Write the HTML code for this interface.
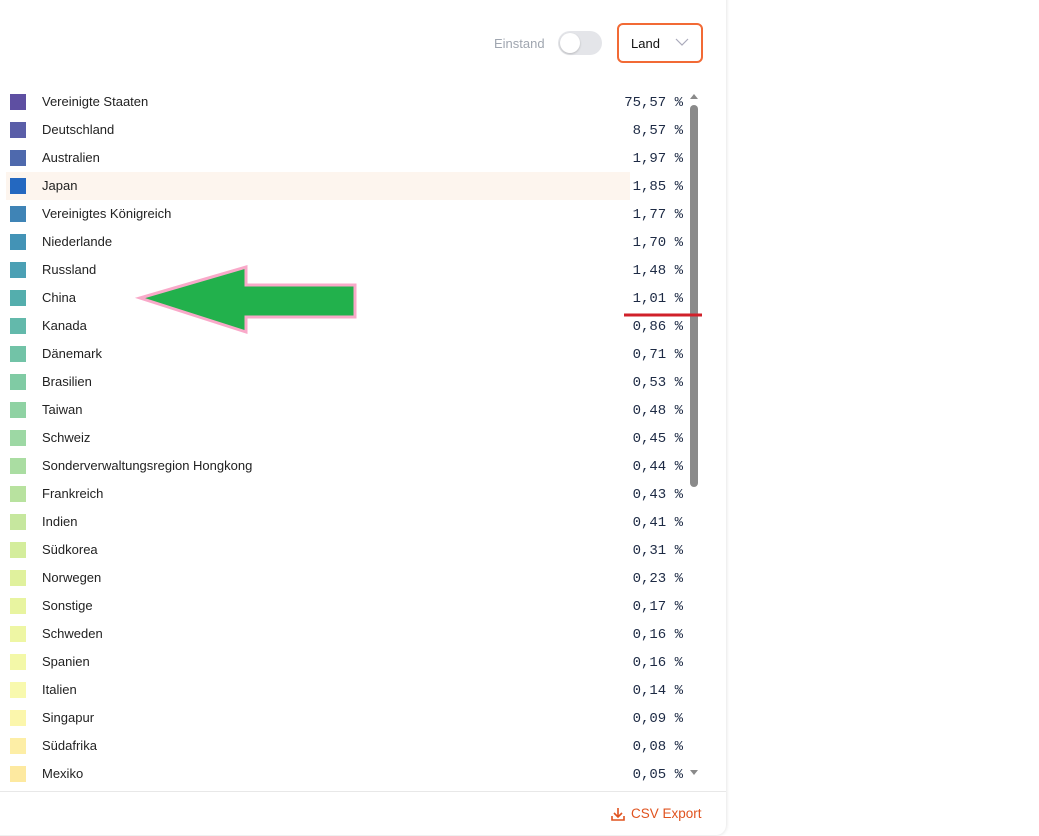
<!DOCTYPE html>
<html><head><meta charset="utf-8"><style>
body{margin:0;width:1039px;height:836px;background:#fff;position:relative;overflow:hidden;font-family:"Liberation Sans",sans-serif}
.card{position:absolute;left:-10px;top:-10px;width:736px;height:845px;background:#fff;border-radius:10px;box-shadow:0 0 4px rgba(0,0,0,.15)}
.row{position:absolute;left:0;width:630px;height:28px}
.sq{position:absolute;left:10px;top:6px;width:16px;height:16px}
.nm{position:absolute;left:42px;top:6px;font-size:13px;color:#222}
.pc{position:absolute;right:-53px;top:7px;font-family:"Liberation Mono",monospace;font-size:14px;color:#1d2a44;white-space:pre}
</style></head><body>
<div class="card"></div>
<div style="position:absolute;left:494px;top:36px;font-size:13px;color:#a0a6b0">Einstand</div>
<div style="position:absolute;left:558px;top:31px;width:44px;height:24px;border-radius:12px;background:#e4e5e9"></div>
<div style="position:absolute;left:560px;top:33px;width:20px;height:20px;border-radius:10px;background:#fff;box-shadow:0 1px 2px rgba(0,0,0,.2)"></div>
<div style="position:absolute;left:617px;top:23px;width:82px;height:36px;border:2px solid #f26a35;border-radius:6px"></div>
<div style="position:absolute;left:631px;top:36px;font-size:13px;color:#111">Land</div>
<svg style="position:absolute;left:675px;top:37px" width="14" height="10"><path d="M1 2 L7 8 L13 2" stroke="#aab" fill="none" stroke-width="1.2"/></svg>
<div style="position:absolute;left:6px;top:172px;width:624px;height:28px;background:#fdf5ee"></div>
<div id="list"></div>
<div style="position:absolute;left:690px;top:105px;width:8px;height:382px;border-radius:4px;background:#8a8a8a"></div>
<svg style="position:absolute;left:688px;top:92px" width="12" height="8"><path d="M2 7 L6 2 L10 7Z" fill="#8a8a8a"/></svg>
<svg style="position:absolute;left:688px;top:769px" width="12" height="8"><path d="M2 1 L6 6 L10 1Z" fill="#8a8a8a"/></svg>
<div style="position:absolute;left:0;top:791px;width:726px;height:1px;background:#e8e8e8"></div>
<svg style="position:absolute;left:610px;top:806px" width="16" height="16"><path d="M8 2 V10 M4 7 L8 11 L12 7 M2 10 V14 H14 V10" stroke="#e0531f" stroke-width="1.6" fill="none"/></svg>
<div style="position:absolute;left:631px;top:806px;font-size:13.5px;color:#e0531f">CSV Export</div>
<svg style="position:absolute;left:0;top:0" width="1039" height="836"><polygon points="140,298 246,267 246,285 355,285 355,317 246,317 246,332" fill="#22b14c" stroke="#f9a9c9" stroke-width="3"/><line x1="624" y1="315" x2="702" y2="315" stroke="#d0202a" stroke-width="3"/></svg>
<script>
var d=[["Vereinigte Staaten","75,57","#5e4fa2"],["Deutschland","8,57","#5a5ea8"],["Australien","1,97","#4e69ad"],["Japan","1,85","#2468c0"],["Vereinigtes Königreich","1,77","#3f84b6"],["Niederlande","1,70","#4393b6"],["Russland","1,48","#4ba0b4"],["China","1,01","#54aead"],["Kanada","0,86","#63b9ab"],["Dänemark","0,71","#72c3a7"],["Brasilien","0,53","#80cba4"],["Taiwan","0,48","#8fd2a3"],["Schweiz","0,45","#9dd8a4"],["Sonderverwaltungsregion Hongkong","0,44","#aadda2"],["Frankreich","0,43","#b8e29f"],["Indien","0,41","#c6e79e"],["Südkorea","0,31","#d4ed9c"],["Norwegen","0,23","#e0f19d"],["Sonstige","0,17","#e8f4a0"],["Schweden","0,16","#eef6a4"],["Spanien","0,16","#f3f8a8"],["Italien","0,14","#f8f9ae"],["Singapur","0,09","#fbf6ac"],["Südafrika","0,08","#fdeea6"],["Mexiko","0,05","#fde9a0"]];
var h="";d.forEach(function(r,i){h+='<div class="row" style="top:'+(88+i*28)+'px"><div class="sq" style="background:'+r[2]+'"></div><div class="nm">'+r[0]+'</div><div class="pc">'+r[1]+' %</div></div>'});
document.getElementById("list").innerHTML=h;
</script>
</body></html>
